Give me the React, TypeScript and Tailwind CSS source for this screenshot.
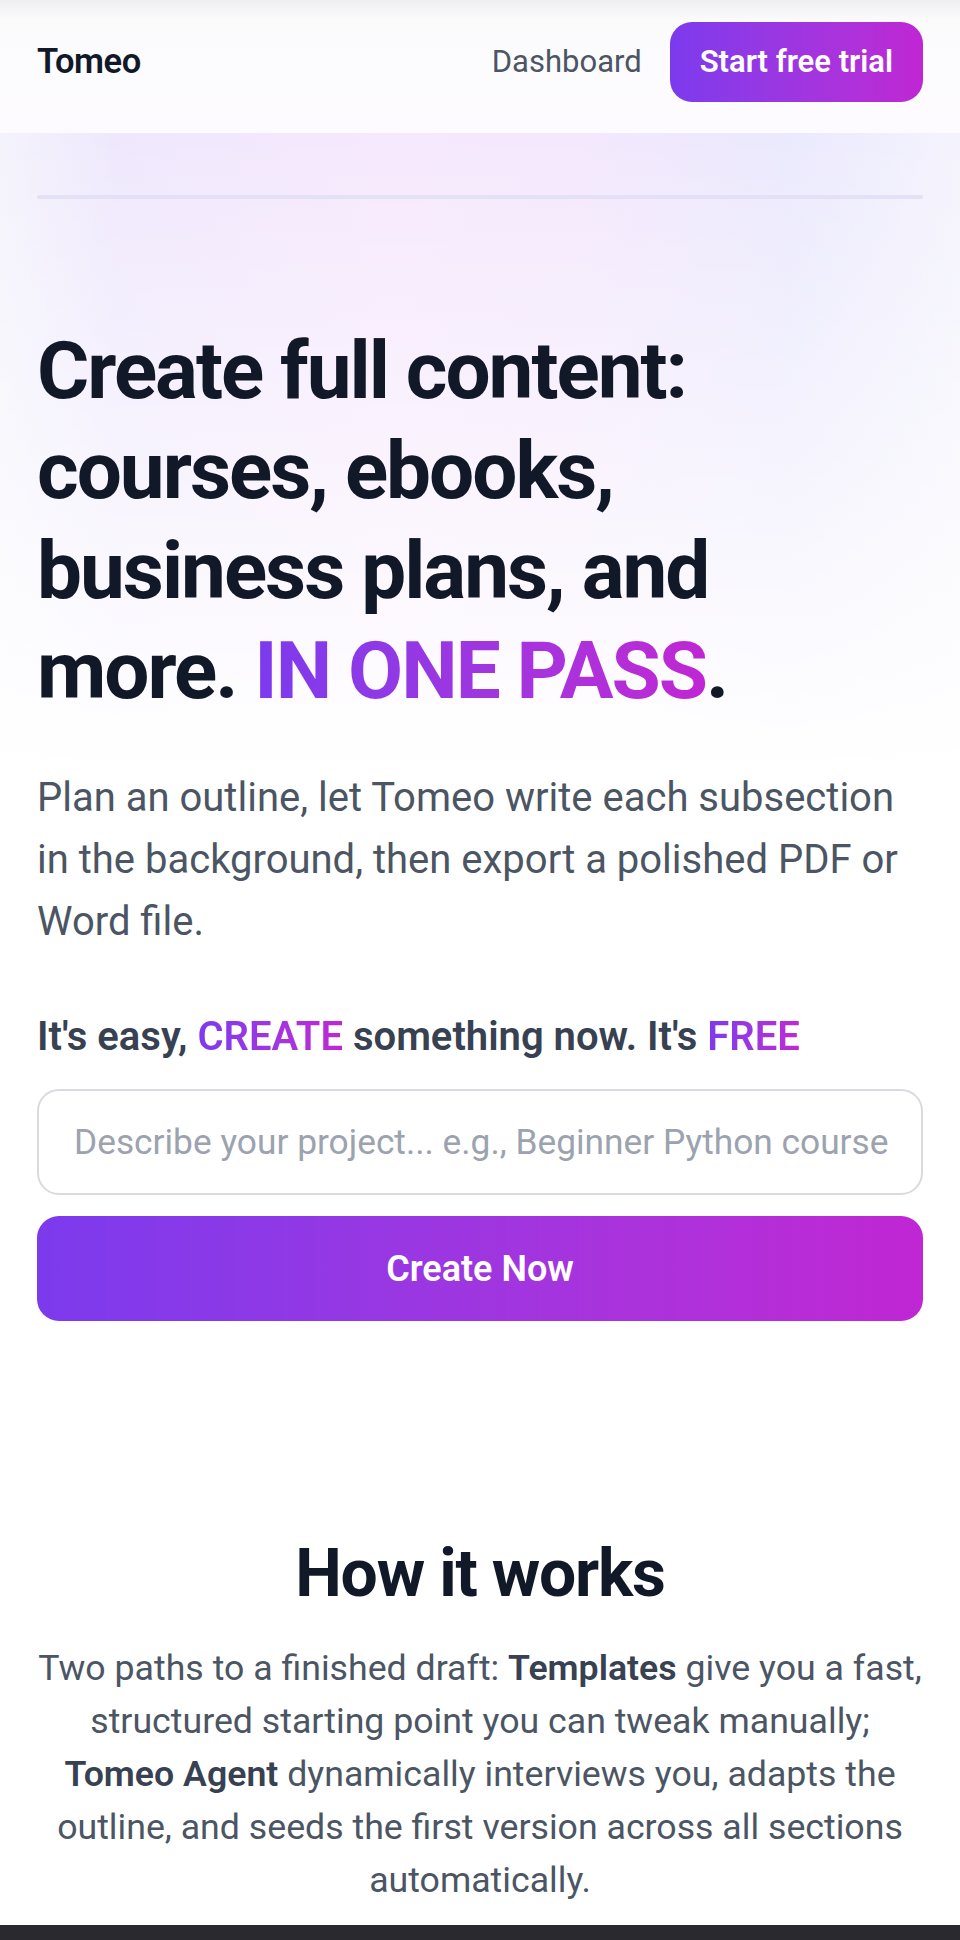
export default function App() {
  return (
    <div className="min-h-screen bg-white font-['Roboto','Liberation_Sans',sans-serif] text-[#111827]">
      {/* Top nav */}
      <header className="flex items-center justify-between border-b border-white/80 bg-[linear-gradient(180deg,#efeff1_0px,#fbfbfc_20px,#fdfbff_100%)] px-[37px] pt-[22px] pb-[30px]">
        <a className="text-[34.5px] font-semibold tracking-[-0.5px] text-[#111827]">Tomeo</a>
        <nav className="flex items-center gap-[28px]">
          <a className="text-[31px] text-[#4b5563]">Dashboard</a>
          <button className="h-[80px] rounded-[22px] bg-linear-to-r from-[#7c3aed] to-[#c026d3] px-[30px] text-[31px] font-semibold text-white">
            Start free trial
          </button>
        </nav>
      </header>

      {/* Hero */}
      <section className="bg-[linear-gradient(180deg,rgba(255,255,255,0)_0px,rgba(255,255,255,0.5)_330px,#ffffff_640px),linear-gradient(90deg,#f4f3fc_0%,#efe8fd_12%,#f6e8fd_40%,#f4e8fd_60%,#ebe9fd_82%,#f4f3fd_100%)] px-[37px] pt-[62px] pb-[120px]">
        <div className="h-[4px] rounded-full bg-[#e4e0f5] blur-[0.6px]" />

        <h1 className="mt-[122px] max-w-[780px] text-[80px] leading-[100px] font-bold tracking-[-2px] text-[#111827]">
          Create full content: courses, ebooks, business plans, and more.{" "}
          <span className="bg-linear-to-r from-[#7c3aed] to-[#c026d3] bg-clip-text text-transparent">IN ONE PASS</span>.
        </h1>

        <p className="mt-[46px] text-[40px] leading-[62px] text-[#4b5563]">
          Plan an outline, let Tomeo write each subsection in the background, then export a polished PDF or Word file.
        </p>

        <p className="mt-[59px] text-[40px] leading-[50px] font-semibold text-[#374151]">
          It's easy,{" "}
          <span className="bg-linear-to-r from-[#7c3aed] to-[#c026d3] bg-clip-text text-transparent">CREATE</span>{" "}
          something now. It's{" "}
          <span className="bg-linear-to-r from-[#7c3aed] to-[#c026d3] bg-clip-text text-transparent">FREE</span>
        </p>

        <input
          type="text"
          placeholder="Describe your project... e.g., Beginner Python course"
          className="mt-[27px] block h-[106px] w-full rounded-[22px] border-2 border-[#dadadf] bg-white pl-[35px] pr-[12px] text-[35.3px] text-[#111827] outline-none placeholder:text-[#9ca3af]"
        />

        <button className="mt-[21px] flex h-[105px] w-full items-center justify-center rounded-[22px] bg-linear-to-r from-[#7c3aed] to-[#c026d3] text-[36px] font-semibold text-white">
          Create Now
        </button>
      </section>

      {/* How it works */}
      <section className="px-[20px] pt-[95px] pb-[18px] text-center">
        <h2 className="text-[66px] leading-[76px] font-bold tracking-[-1.2px] text-[#111827]">How it works</h2>
        <p className="mt-[30px] text-[35.7px] leading-[53px] text-[#4b5563]">
          Two paths to a finished draft: <strong className="font-semibold text-[#374151]">Templates</strong> give you a fast,
          <br />
          structured starting point you can tweak manually;
          <br />
          <strong className="font-semibold text-[#374151]">Tomeo Agent</strong> dynamically interviews you, adapts the
          <br />
          outline, and seeds the first version across all sections
          <br />
          automatically.
        </p>
      </section>

      <footer className="h-[240px] bg-[#2a2930]" />
    </div>
  );
}
